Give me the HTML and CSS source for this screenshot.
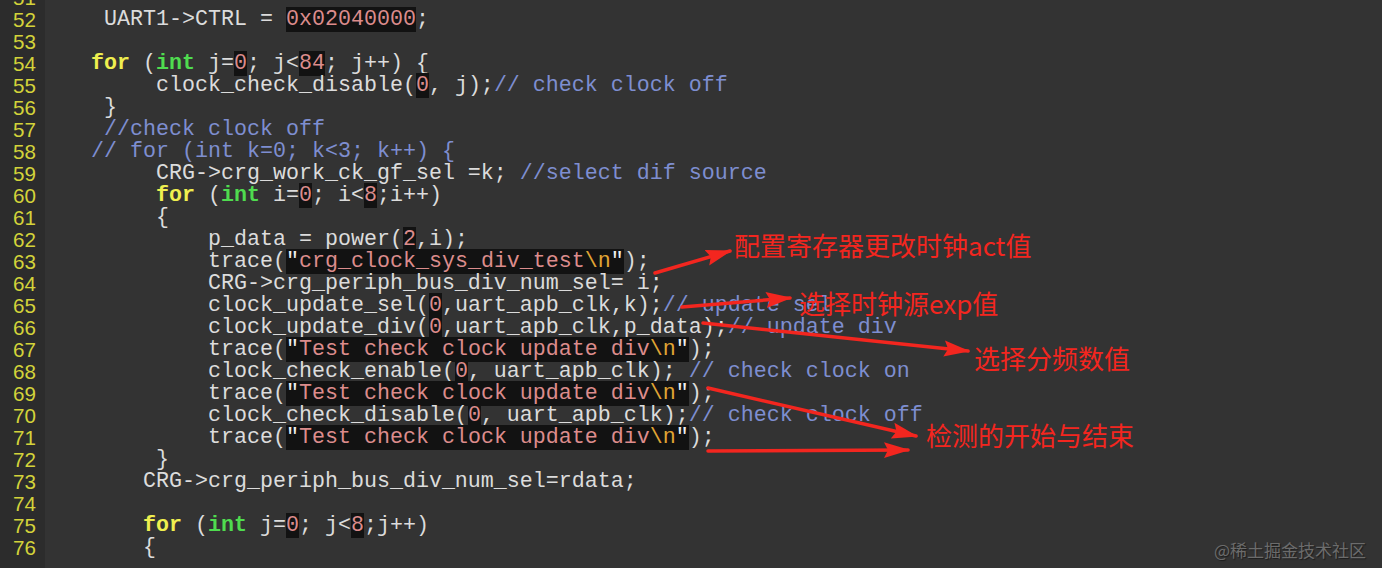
FILE: index.html
```html
<!DOCTYPE html>
<html>
<head>
<meta charset="utf-8">
<link rel="stylesheet" href="styles.css">
</head>
<body>
<div class="editor">
  <div class="gutter">
    <div>51</div><div>52</div><div>53</div><div>54</div><div>55</div><div>56</div><div>57</div><div>58</div><div>59</div><div>60</div><div>61</div><div>62</div><div>63</div><div>64</div><div>65</div><div>66</div><div>67</div><div>68</div><div>69</div><div>70</div><div>71</div><div>72</div><div>73</div><div>74</div><div>75</div><div>76</div>
  </div>
  <pre class="code"><div> </div><div>    UART1-&gt;CTRL = <span class="n">0x02040000</span>;</div><div> </div><div>   <span class="kw">for</span> (<span class="ty">int</span> j=<span class="n">0</span>; j&lt;<span class="n">84</span>; j++) {</div><div>        clock_check_disable(<span class="n">0</span>, j);<span class="c">// check clock off</span></div><div>    }</div><div>    <span class="c">//check clock off</span></div><div>   <span class="c">// for (int k=0; k&lt;3; k++) {</span></div><div>        CRG-&gt;crg_work_ck_gf_sel =k; <span class="c">//select dif source</span></div><div>        <span class="kw">for</span> (<span class="ty">int</span> i=<span class="n">0</span>; i&lt;<span class="n">8</span>;i++)</div><div>        {</div><div>            p_data = power(<span class="n">2</span>,i);</div><div>            trace(<span class="s"><span class="q">"</span>crg_clock_sys_div_test<span class="e">\n</span><span class="q">"</span></span>);</div><div>            CRG-&gt;crg_periph_bus_div_num_sel= i;</div><div>            clock_update_sel(<span class="n">0</span>,uart_apb_clk,k);<span class="c">// update sel</span></div><div>            clock_update_div(<span class="n">0</span>,uart_apb_clk,p_data);<span class="c">// update div</span></div><div>            trace(<span class="s"><span class="q">"</span>Test check clock update div<span class="e">\n</span><span class="q">"</span></span>);</div><div>            clock_check_enable(<span class="n">0</span>, uart_apb_clk); <span class="c">// check clock on</span></div><div>            trace(<span class="s"><span class="q">"</span>Test check clock update div<span class="e">\n</span><span class="q">"</span></span>);</div><div>            clock_check_disable(<span class="n">0</span>, uart_apb_clk);<span class="c">// check clock off</span></div><div>            trace(<span class="s"><span class="q">"</span>Test check clock update div<span class="e">\n</span><span class="q">"</span></span>);</div><div>        }</div><div>       CRG-&gt;crg_periph_bus_div_num_sel=rdata;</div><div> </div><div>       <span class="kw">for</span> (<span class="ty">int</span> j=<span class="n">0</span>; j&lt;<span class="n">8</span>;j++)</div><div>       {</div></pre>
</div>

<svg class="arrows" width="1382" height="568" viewBox="0 0 1382 568">
  <defs>
    <marker id="head" markerUnits="userSpaceOnUse" markerWidth="26" markerHeight="18" refX="24" refY="9" orient="auto">
      <path d="M0,1 L26,9 L0,17 L4,9 Z" fill="#f3261f"/>
    </marker>
  </defs>
  <g stroke="#f3261f" stroke-width="3.5" stroke-linecap="round" marker-end="url(#head)">
    <line x1="655" y1="273" x2="730" y2="251"/>
    <line x1="682" y1="307" x2="790" y2="298"/>
    <line x1="703" y1="323" x2="968" y2="351"/>
    <line x1="708" y1="388" x2="916" y2="436"/>
    <line x1="708" y1="451" x2="908" y2="450"/>
  </g>
</svg>

<div class="label l1">配置寄存器更改时钟act值</div>
<div class="label l2">选择时钟源exp值</div>
<div class="label l3">选择分频数值</div>
<div class="label l4">检测的开始与结束</div>

<div class="watermark">@稀土掘金技术社区</div>
</body>
</html>
```

FILE: styles.css
```css
html, body {
  margin: 0;
  padding: 0;
  width: 1382px;
  height: 568px;
  overflow: hidden;
  background: #333333;
}

.editor {
  display: flex;
  height: 568px;
  overflow: hidden;
}

.gutter {
  width: 36px;
  padding-right: 9px;
  flex: none;
  background: #2c2c2c;
  margin-top: -13px;
  text-align: right;
  font-family: "Liberation Sans", Arial, sans-serif;
  font-size: 20.6px;
  line-height: 22px;
  color: #d3d33a;
}

.code {
  margin: -13px 0 0 0;
  padding-left: 7px;
  font-family: "Liberation Mono", "Courier New", monospace;
  font-size: 21.66px;
  line-height: 22px;
  color: #dcdcdc;
  white-space: pre;
}

.code div {
  height: 22px;
}

.kw {
  color: #efef4f;
  font-weight: bold;
}

.ty {
  color: #4fdc4f;
  font-weight: bold;
}

.n {
  color: #dc8c8c;
  background: #121212;
}

.s {
  color: #dc8c8c;
  background: #121212;
}

.q {
  color: #eeeeee;
}

.e {
  color: #e0a534;
}

.c {
  color: #7e8ed0;
}

.arrows {
  position: absolute;
  left: 0;
  top: 0;
  pointer-events: none;
}

.label {
  position: absolute;
  font-family: "Noto Sans CJK SC", "Noto Sans", sans-serif;
  font-size: 26px;
  line-height: 26px;
  color: #f3261f;
  white-space: nowrap;
}

.l1 { left: 734px; top: 232px; }
.l2 { left: 799px; top: 290px; }
.l3 { left: 974px; top: 345px; }
.l4 { left: 926px; top: 422px; }

.watermark {
  position: absolute;
  left: 1214px;
  top: 540px;
  font-family: "Noto Sans CJK SC", "Noto Sans", sans-serif;
  font-size: 17px;
  line-height: 20px;
  color: #6c6c6c;
  text-shadow: 1px 1px 1px rgba(0, 0, 0, 0.45);
  white-space: nowrap;
}
```
